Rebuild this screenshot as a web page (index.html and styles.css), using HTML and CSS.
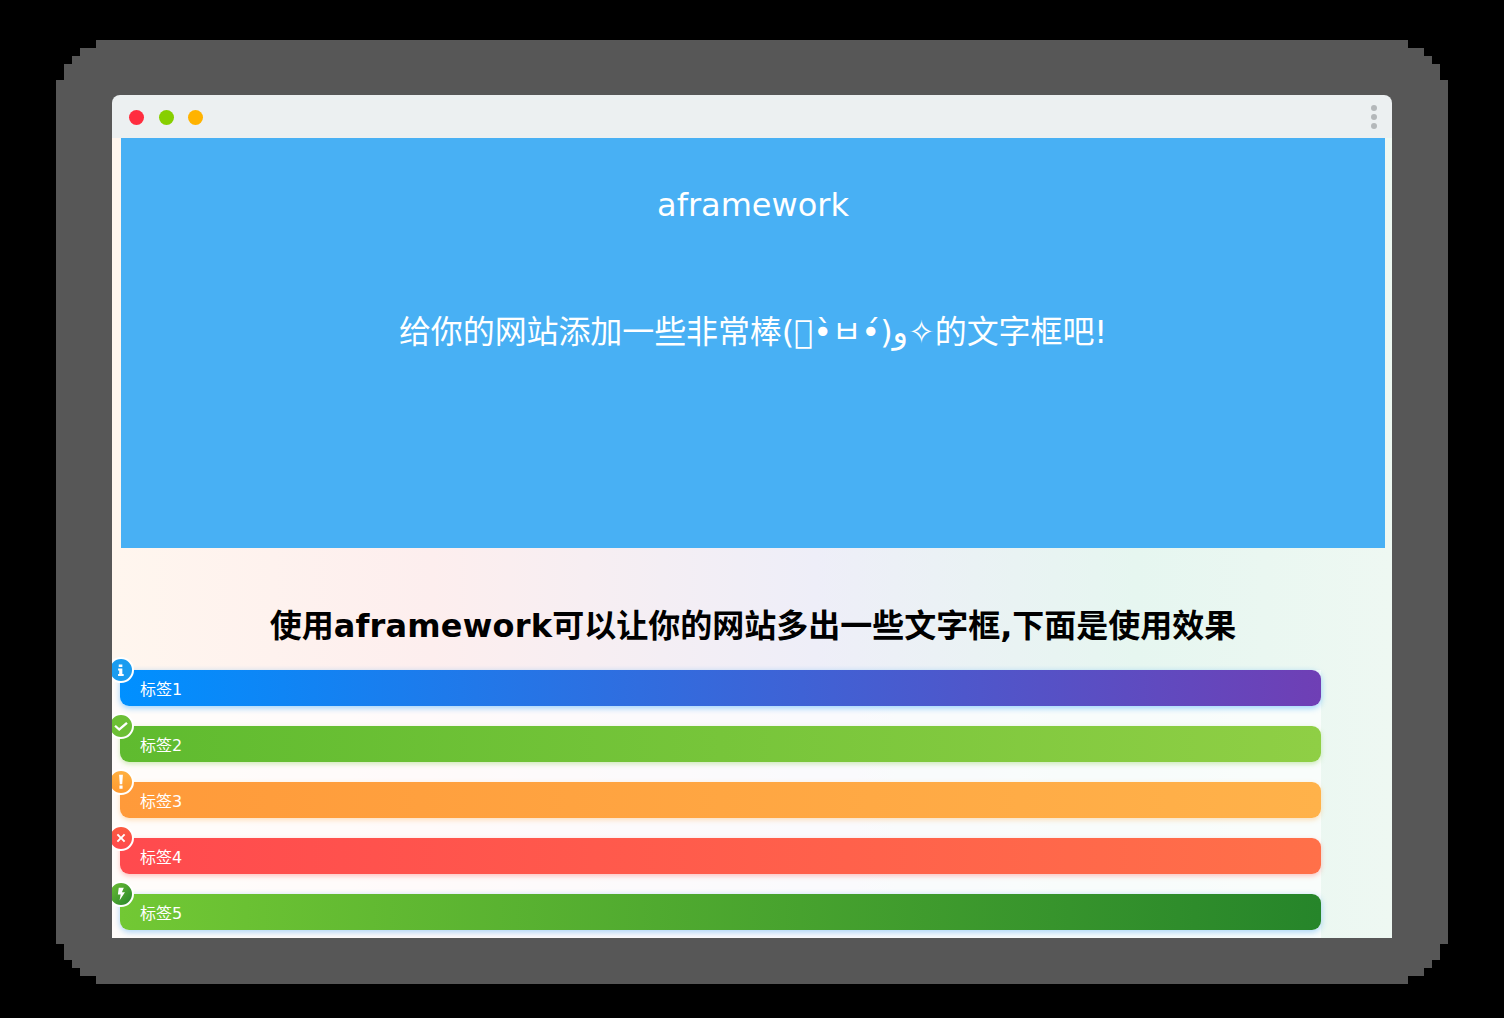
FILE: index.html
```html
<!DOCTYPE html>
<html lang="zh-CN">
<head>
    <meta charset="UTF-8">
    <meta name="viewport" content="width=device-width, initial-scale=1.0">
    <title>aframework</title>
    <link rel="stylesheet" href="styles.css">
</head>
<body>
    <div class="backdrop">
        <div class="window">
            <div class="titlebar">
                <div class="lights">
                    <span class="light red"></span>
                    <span class="light green"></span>
                    <span class="light yellow"></span>
                </div>
                <div class="dots"><span></span><span></span><span></span></div>
            </div>
            <div class="content">
                <div class="hero">
                    <h1>aframework</h1>
                    <p>给你的网站添加一些非常棒(&#xE000;•̀ㅂ•́)و✧的文字框吧!</p>
                </div>
                <h2>使用<span class="brand">aframework</span>可以让你的网站多出一些文字框,下面是使用效果</h2>
                <div class="tags">
                    <div class="tag tag-info">
                        <span class="badge">
                            <svg viewBox="0 0 16 16"><path d="M6 3h3.200v2.400H6zM5.400 6.600h3.800v5h1.200v1.800H5.400v-1.800h1v-3.200h-1z"/></svg>
                        </span>
                        标签1
                    </div>
                    <div class="tag tag-ok">
                        <span class="badge">
                            <svg viewBox="0 0 16 16"><path d="M2 8.400l1.400-1.400 3 2.700 6.200-5.200 1.400 1.400-7.600 6.500z"/></svg>
                        </span>
                        标签2
                    </div>
                    <div class="tag tag-warn">
                        <span class="badge">
                            <svg viewBox="0 0 16 16"><path d="M6.300 1.500h3.400l-.6 8.600H6.900zM6.600 11.200h2.800v2.800H6.600z"/></svg>
                        </span>
                        标签3
                    </div>
                    <div class="tag tag-error">
                        <span class="badge">
                            <svg viewBox="0 0 16 16"><path d="M5.400 4.200L8 6.800l2.600-2.600 1.200 1.200L9.200 8l2.600 2.600-1.200 1.200L8 9.200l-2.600 2.600-1.200-1.200L6.800 8 4.200 5.400z"/></svg>
                        </span>
                        标签4
                    </div>
                    <div class="tag tag-bolt">
                        <span class="badge">
                            <svg viewBox="0 0 16 16"><path d="M6 2.500h4.500L8.800 6.500h2.700L6.700 13.800l1-5.300H5.200z"/></svg>
                        </span>
                        标签5
                    </div>
                </div>
            </div>
        </div>
    </div>
</body>
</html>
```

FILE: styles.css
```css
* {
    box-sizing: border-box;
}
html, body {
    height: 100%;
}
body {
    margin: 0;
    padding: 40px 56px 34px;
    background-color: #000;
    font-family: "DejaVu Sans", "Noto Sans CJK SC", sans-serif;
    overflow: hidden;
}
.backdrop {
    height: 944px;
    padding: 55px 56px 46px;
    background-color: #575757;
    clip-path: polygon(
        40px 0, calc(100% - 40px) 0,
        calc(100% - 40px) 8px, calc(100% - 24px) 8px,
        calc(100% - 24px) 16px, calc(100% - 16px) 16px,
        calc(100% - 16px) 24px, calc(100% - 8px) 24px,
        calc(100% - 8px) 40px, 100% 40px,
        100% calc(100% - 40px), calc(100% - 8px) calc(100% - 40px),
        calc(100% - 8px) calc(100% - 24px), calc(100% - 16px) calc(100% - 24px),
        calc(100% - 16px) calc(100% - 16px), calc(100% - 24px) calc(100% - 16px),
        calc(100% - 24px) calc(100% - 8px), calc(100% - 40px) calc(100% - 8px),
        calc(100% - 40px) 100%, 40px 100%,
        40px calc(100% - 8px), 24px calc(100% - 8px),
        24px calc(100% - 16px), 16px calc(100% - 16px),
        16px calc(100% - 24px), 8px calc(100% - 24px),
        8px calc(100% - 40px), 0 calc(100% - 40px),
        0 40px, 8px 40px,
        8px 24px, 16px 24px,
        16px 16px, 24px 16px,
        24px 8px, 40px 8px
    );
}
.window {
    height: 843px;
    border-radius: 8px 8px 0 0;
    overflow: hidden;
    display: flex;
    flex-direction: column;
}
.titlebar {
    height: 43px;
    flex: none;
    display: flex;
    align-items: center;
    justify-content: space-between;
    padding: 1px 15px 0 17px;
    background-color: #ecf0f1;
}
.lights {
    display: flex;
    gap: 14.7px;
}
.light {
    width: 15px;
    height: 15px;
    border-radius: 50%;
}
.red {
    background-color: #ff2d3f;
}
.green {
    background-color: #87cf00;
}
.yellow {
    background-color: #ffb300;
}
.dots {
    display: flex;
    flex-direction: column;
    gap: 3px;
    margin-top: -1px;
}
.dots span {
    width: 6px;
    height: 6px;
    border-radius: 50%;
    background-color: #b4b8ba;
}
.content {
    flex: 1;
    overflow: hidden;
    padding: 0 7px 0 9px;
    background: linear-gradient(90deg, #fff6ee 0%, #fdeeee 25%, #eeeef8 55%, #e6f6f0 80%, #eef8f2 100%);
}
.hero {
    height: 410px;
    padding-top: 46px;
    text-align: center;
    background-color: #48b0f4;
    color: #fff;
}
.hero h1 {
    margin: 0;
    font-size: 32px;
    font-weight: normal;
    line-height: 42px;
}
.hero p {
    margin: 85px 0 0;
    font-size: 32px;
    line-height: 42px;
    letter-spacing: -0.1px;
}
h2 {
    margin: 58px 0 0;
    font-size: 32px;
    font-weight: bold;
    line-height: 40px;
    text-align: center;
    color: #000;
}
.brand {
    letter-spacing: 0.2px;
}
.tags {
    margin: 24px 0 0 -9px;
    padding: 0 0 40px 8px;
    width: 1209px;
    background-color: rgba(255, 255, 255, 0.7);
}
.tag {
    position: relative;
    height: 36px;
    margin-bottom: 20px;
    padding: 4px 20px 0;
    border-radius: 9px;
    color: #fff;
    font-size: 16px;
    line-height: 32px;
}
.badge {
    position: absolute;
    left: -12.5px;
    top: -13px;
    width: 26px;
    height: 26px;
    border: 2px solid #fff;
    border-radius: 50%;
    display: flex;
    align-items: center;
    justify-content: center;
}
.badge svg {
    width: 18px;
    height: 18px;
    flex: none;
    fill: #fff;
}
.tag-info {
    background: linear-gradient(90deg, #0090ff, #6f3fb5);
    box-shadow: 0 2px 6px rgba(0, 144, 255, 0.4);
}
.tag-info .badge {
    background-color: #1a9cf0;
}
.tag-ok {
    background: linear-gradient(90deg, #5fbb2f, #8fcf45);
    box-shadow: 0 2px 5px rgba(120, 200, 60, 0.35);
}
.tag-ok .badge {
    background-color: #6cbf35;
}
.tag-warn {
    background: linear-gradient(90deg, #ff9a3a, #ffb24a);
    box-shadow: 0 2px 5px rgba(255, 170, 70, 0.35);
}
.tag-warn .badge {
    background: linear-gradient(180deg, #ffb040, #ff9a30);
}
.tag-error {
    background: linear-gradient(90deg, #ff4a4e, #ff7049);
    box-shadow: 0 2px 5px rgba(255, 90, 80, 0.35);
}
.tag-error .badge {
    background: linear-gradient(180deg, #fb5a40, #ff4a4e);
}
.tag-bolt {
    background: linear-gradient(90deg, #72c834, #26852a);
    box-shadow: 0 2px 6px rgba(60, 160, 240, 0.45);
}
.tag-bolt .badge {
    background: linear-gradient(135deg, #6dbf35, #26852a);
}
```
